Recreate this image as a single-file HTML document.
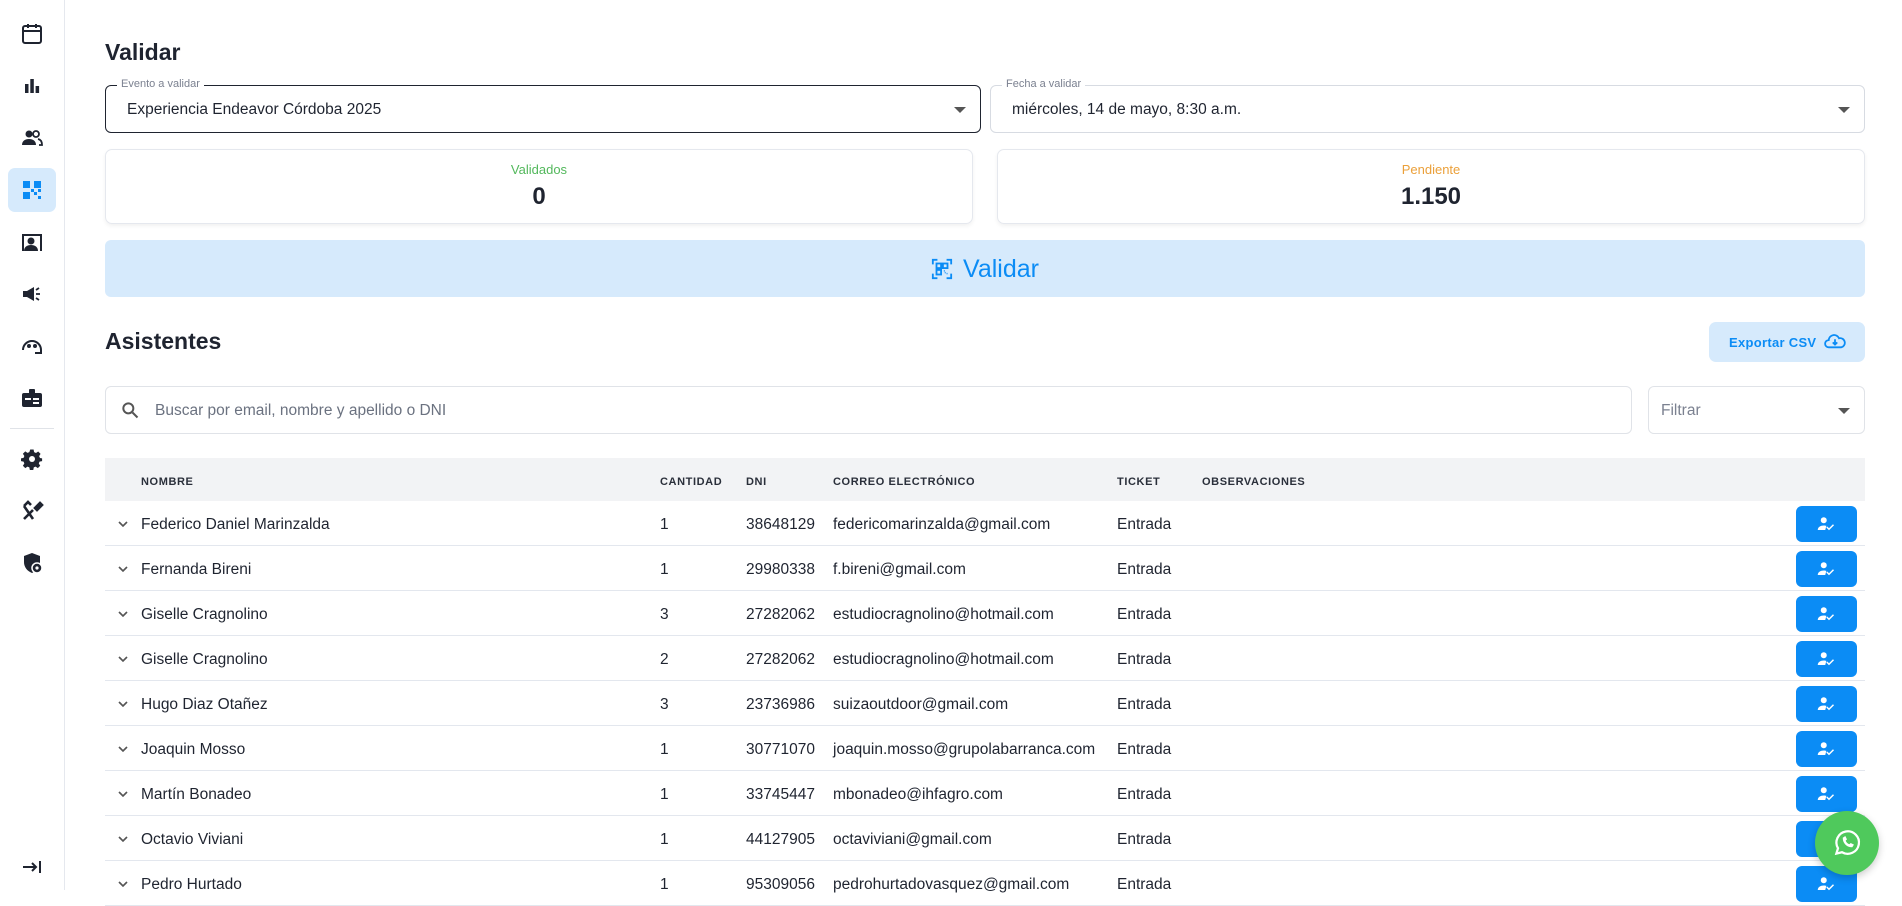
<!DOCTYPE html>
<html><head><meta charset="utf-8">
<style>
*{box-sizing:border-box;margin:0;padding:0}
body{width:1902px;height:890px;overflow:hidden;background:#fff;font-family:"Liberation Sans",sans-serif;color:#1f2430;position:relative}
.abs{position:absolute}
.side{left:0;top:0;width:65px;height:890px;border-right:1px solid #e5e8ee;background:#fff}
.ic{position:absolute;left:20px;width:24px;height:24px}
.h1{font-weight:bold;font-size:23px;color:#1f2430}
.sel{border:1px solid #d7dbe2;border-radius:6px;height:48px}
.sel .lab{position:absolute;top:-8px;left:11px;background:#fff;padding:0 4px;font-size:11px;color:#7b8190}
.sel .val{position:absolute;left:21px;top:15px;font-size:15.5px;color:#1f2430}
.sel .arr{position:absolute;right:14px;top:21px;width:0;height:0;border-left:6px solid transparent;border-right:6px solid transparent;border-top:6px solid #555}
.card{border:1px solid #e5e8ee;border-radius:7px;height:75px;box-shadow:0 2px 4px rgba(0,0,0,.06);text-align:center}
.card .l{font-size:13px;margin-top:12px}
.card .v{font-size:24px;font-weight:bold;margin-top:6px}
.row{position:absolute;left:105px;width:1760px;height:45px;border-bottom:1px solid #e3e7ee;font-size:15.5px;color:#1f2430}
.row span{position:absolute;top:15px}
.chev{position:absolute;left:10px;top:15px}
.btn{position:absolute;left:1691px;top:5px;width:61px;height:36px;background:#0b8cf5;border-radius:6px}
.btn svg{position:absolute;left:21px;top:10px}
.th{position:absolute;top:18px;font-size:11px;font-weight:bold;letter-spacing:.6px;color:#2a2f3a}
</style></head><body>
<div class="abs side">
<svg class="ic" style="top:22px" viewBox="0 0 24 24" fill="none" stroke="#1f2430" stroke-width="2"><rect x="3" y="4" width="18" height="17" rx="2"/><path d="M3 9h18M8 2v4M16 2v4"/></svg>
<svg class="ic" style="top:74px" viewBox="0 0 24 24" fill="#1f2430"><rect x="5" y="10" width="3.5" height="9"/><rect x="10.3" y="5" width="3.5" height="14"/><rect x="15.6" y="12" width="3.5" height="7"/></svg>
<svg class="ic" style="top:126px" viewBox="0 0 24 24" fill="#1f2430"><circle cx="9" cy="8" r="3.5"/><path d="M2 19c0-4 3-6 7-6s7 2 7 6z"/><circle cx="16" cy="8" r="3" fill="none" stroke="#1f2430" stroke-width="1.8"/><path d="M18 13c2.5.5 4 2.5 4 6h-3" fill="none" stroke="#1f2430" stroke-width="1.8"/></svg>
<div class="abs" style="left:8px;top:168px;width:48px;height:44px;background:#d6eafc;border-radius:7px"></div>
<svg class="ic" style="top:178px" viewBox="0 0 24 24" fill="#0b8cf5"><rect x="3" y="3" width="7" height="7"/><rect x="14" y="3" width="7" height="7"/><rect x="3" y="14" width="7" height="7"/><rect x="14" y="14" width="3" height="3"/><rect x="18" y="18" width="3" height="3"/><rect x="11" y="11" width="3" height="3"/><rect x="18" y="11" width="3" height="3"/></svg>
<svg class="ic" style="top:231px" viewBox="0 0 24 24" fill="#1f2430"><path d="M2 3h20v17h-2V5H4v15H2z"/><circle cx="11" cy="10" r="3.5"/><path d="M4 20c0-4 3-6 7-6s7 2 7 6z"/></svg>
<svg class="ic" style="top:282px" viewBox="0 0 24 24" fill="#1f2430"><path d="M3 9h4l7-4v14l-7-4H3z"/><path d="M16 8l3-2M16 12h4M16 16l3 2" stroke="#1f2430" stroke-width="1.8"/></svg>
<svg class="ic" style="top:334px" viewBox="0 0 24 24" fill="none" stroke="#1f2430" stroke-width="2"><path d="M3 16a9 9 0 0 1 18 0v3h-6"/><circle cx="9" cy="12" r="1" fill="#1f2430"/><circle cx="15" cy="12" r="1" fill="#1f2430"/></svg>
<svg class="ic" style="top:386px" viewBox="0 0 24 24" fill="#1f2430"><rect x="2" y="7" width="20" height="14" rx="2"/><rect x="9" y="3" width="6" height="6" rx="1"/><rect x="5" y="12" width="6" height="2" fill="#fff"/><rect x="13" y="12" width="6" height="2" fill="#fff"/><rect x="13" y="16" width="6" height="2" fill="#fff"/></svg>
<div class="abs" style="left:10px;top:428px;width:44px;height:1px;background:#e0e3e8"></div>
<svg class="ic" style="top:447px" viewBox="0 0 24 24" fill="#1f2430"><path d="M10 2h4l.6 3 2.2 1 2.6-1.7 2.8 2.8L20.5 9.7l1 2.3 2.5.4v3.2l-3 .6-.9 2.2 1.7 2.6-2.8 2.8-2.6-1.7-2.2.9-.6 3h-4l-.6-3-2.2-.9-2.6 1.7-2.8-2.8 1.7-2.6-.9-2.2-3-.6v-3.2l3-.6.9-2.2-1.7-2.6 2.8-2.8 2.6 1.7 2.2-.9z" transform="scale(.85) translate(2 1)"/><circle cx="12" cy="12" r="3" fill="#fff"/></svg>
<svg class="ic" style="top:499px" viewBox="0 0 24 24" fill="none" stroke="#1f2430" stroke-width="2.6"><path d="M4 20l9-9M13 20L4 7M4 7l4-4 3 3"/><path d="M15 9l5-5 2 2-5 5z" fill="#1f2430"/></svg>
<svg class="ic" style="top:551px" viewBox="0 0 24 24" fill="#1f2430"><path d="M12 2l8 3v6c0 5-3 9-8 11-5-2-8-6-8-11V5z"/><circle cx="17" cy="17" r="5" fill="#1f2430" stroke="#fff" stroke-width="1.5"/><circle cx="17" cy="17" r="1.6" fill="#fff"/></svg>
<svg class="ic" style="top:855px" viewBox="0 0 24 24" fill="none" stroke="#1f2430" stroke-width="2"><path d="M3 12h13M12 8l4 4-4 4M20 6v12"/></svg>
</div>

<div class="abs h1" style="left:105px;top:39px">Validar</div>

<div class="abs sel" style="left:105px;top:85px;width:876px;border-color:#1f2430"><div class="lab">Evento a validar</div><div class="val">Experiencia Endeavor Córdoba 2025</div><div class="arr"></div></div>
<div class="abs sel" style="left:990px;top:85px;width:875px"><div class="lab">Fecha a validar</div><div class="val">miércoles, 14 de mayo, 8:30 a.m.</div><div class="arr"></div></div>

<div class="abs card" style="left:105px;top:149px;width:868px"><div class="l" style="color:#53b85c">Validados</div><div class="v">0</div></div>
<div class="abs card" style="left:997px;top:149px;width:868px"><div class="l" style="color:#eba03a">Pendiente</div><div class="v">1.150</div></div>

<div class="abs" style="left:105px;top:240px;width:1760px;height:57px;background:#d6eafc;border-radius:6px"></div>
<svg class="abs" style="left:931px;top:258px" width="22" height="22" viewBox="0 0 24 24" fill="none" stroke="#0b8cf5" stroke-width="2"><path d="M2 7V2h5M17 2h5v5M22 17v5h-5M7 22H2v-5"/><rect x="6" y="6" width="5" height="5"/><rect x="13" y="6" width="5" height="5"/><rect x="6" y="13" width="5" height="5"/><path d="M14 14h1M17 17h1M15 16h1" stroke-width="1.6"/></svg>
<div class="abs" style="left:963px;top:255px;font-size:25px;color:#0b8cf5">Validar</div>

<div class="abs h1" style="left:105px;top:328px">Asistentes</div>
<div class="abs" style="left:1709px;top:322px;width:156px;height:40px;background:#d6eafc;border-radius:7px"></div>
<div class="abs" style="left:1729px;top:335px;font-size:13px;font-weight:bold;color:#0b8cf5;letter-spacing:.3px">Exportar CSV</div>
<svg class="abs" style="left:1824px;top:332px" width="22" height="18" viewBox="0 0 24 20" fill="none" stroke="#0b8cf5" stroke-width="2"><path d="M6 17H5a4 4 0 0 1 0-8 6 6 0 0 1 11.5-2A5 5 0 0 1 19 17h-1z"/><path d="M12 8v6M9.5 11.5L12 14l2.5-2.5"/></svg>

<div class="abs sel" style="left:105px;top:386px;width:1527px;height:48px;border-color:#e0e3e8"><svg class="abs" style="left:14px;top:13px" width="20" height="20" viewBox="0 0 24 24" fill="none" stroke="#555" stroke-width="2.4"><circle cx="10" cy="10" r="6"/><path d="M15 15l6 6"/></svg><div class="val" style="left:49px;color:#6b7280">Buscar por email, nombre y apellido o DNI</div></div>
<div class="abs sel" style="left:1648px;top:386px;width:217px;height:48px;border-color:#e0e3e8"><div class="val" style="left:12px;color:#7b8190">Filtrar</div><div class="arr" style="top:21px"></div></div>

<div class="abs" style="left:105px;top:458px;width:1760px;height:43px;background:#f2f3f5">
<span class="th" style="left:36px">NOMBRE</span><span class="th" style="left:555px">CANTIDAD</span><span class="th" style="left:641px">DNI</span><span class="th" style="left:728px">CORREO ELECTRÓNICO</span><span class="th" style="left:1012px">TICKET</span><span class="th" style="left:1097px">OBSERVACIONES</span></div>

<div id="rows"></div>
<script>
var d=[["Federico Daniel Marinzalda","1","38648129","federicomarinzalda@gmail.com"],["Fernanda Bireni","1","29980338","f.bireni@gmail.com"],["Giselle Cragnolino","3","27282062","estudiocragnolino@hotmail.com"],["Giselle Cragnolino","2","27282062","estudiocragnolino@hotmail.com"],["Hugo Diaz Otañez","3","23736986","suizaoutdoor@gmail.com"],["Joaquin Mosso","1","30771070","joaquin.mosso@grupolabarranca.com"],["Martín Bonadeo","1","33745447","mbonadeo@ihfagro.com"],["Octavio Viviani","1","44127905","octaviviani@gmail.com"],["Pedro Hurtado","1","95309056","pedrohurtadovasquez@gmail.com"]];
var h="";
d.forEach(function(r,i){h+='<div class="row" style="top:'+(501+i*45)+'px"><svg class="chev" width="16" height="16" viewBox="0 0 24 24" fill="none" stroke="#555" stroke-width="2.5"><path d="M6 9l6 6 6-6"/></svg><span style="left:36px">'+r[0]+'</span><span style="left:555px">'+r[1]+'</span><span style="left:641px">'+r[2]+'</span><span style="left:728px">'+r[3]+'</span><span style="left:1012px">Entrada</span><div class="btn"><svg width="18" height="16" viewBox="0 0 24 20" fill="#fff"><circle cx="9" cy="5" r="4"/><path d="M1 18c0-4 4-6 8-6 1.5 0 2.5.2 3.5.5L11 18z"/><path d="M13 14l3 3 6-6" fill="none" stroke="#fff" stroke-width="2"/></svg></div></div>';});
document.getElementById("rows").innerHTML=h;
</script>

<div class="abs" style="left:1815px;top:811px;width:64px;height:64px;border-radius:50%;background:#4fc95c;box-shadow:0 3px 8px rgba(0,0,0,.2)"></div>
<svg class="abs" style="left:1832px;top:828px" width="30" height="30" viewBox="0 0 24 24" fill="none" stroke="#fff" stroke-width="1.8"><path d="M3.5 20.5l1.3-4.3A9 9 0 1 1 8 19.4z"/><path d="M9 8c0 4 3 7 7 7l1-1.5-2-1-1 1c-1.5-.5-3-2-3.5-3.5l1-1-1-2z" fill="#fff" stroke-width="0.8"/></svg>
</body></html>
